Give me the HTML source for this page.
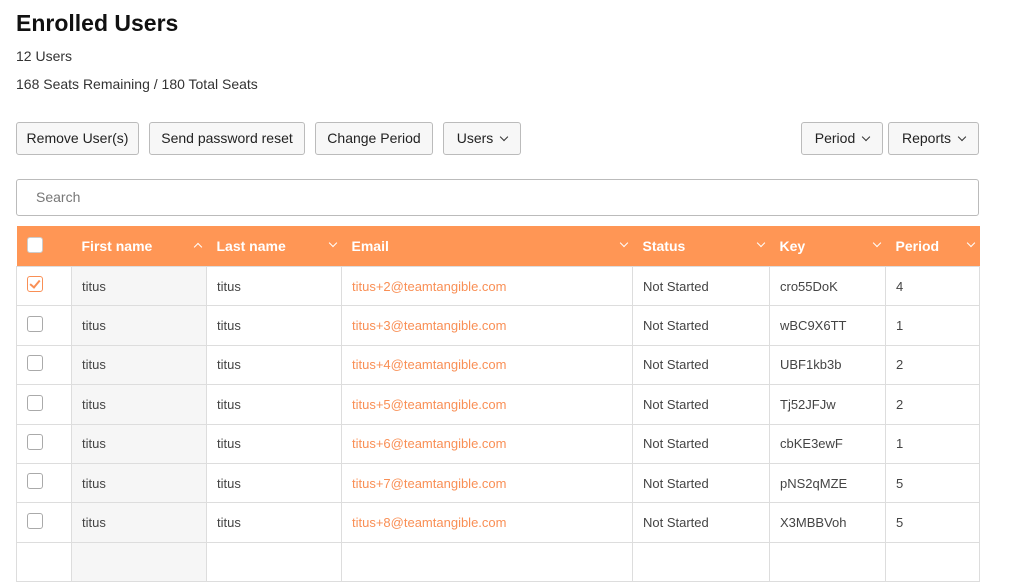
<!DOCTYPE html><html><head><style>
body{margin:0;width:1024px;height:550px;overflow:hidden;background:#fff;font-family:"Liberation Sans",sans-serif;color:#333;position:relative}
.a{position:absolute}
h1{position:absolute;left:16px;top:10px;margin:0;font-size:23px;font-weight:bold;color:#111}
.btn{position:absolute;top:122px;height:31px;border:1px solid #bbb;border-radius:3px;background:#f7f7f7;font-size:14px;line-height:31px;text-align:center;color:#222;box-sizing:content-box}
.chev{display:inline-block;width:5px;height:5px;border-right:1.5px solid #333;border-bottom:1.5px solid #333;transform:rotate(45deg);margin-left:8px;position:relative;top:-3px}
.hc{display:inline-block;width:5px;height:5px;border-right:1.5px solid #fff;border-bottom:1.5px solid #fff;transform:rotate(45deg);position:absolute;top:14px}
.up{transform:rotate(-135deg);top:18px}
.search{left:16px;top:179px;width:961px;height:35px;border:1px solid #bbb;border-radius:3px;font-size:14px;line-height:35px;color:#777;text-indent:19px}
table{position:absolute;left:16px;top:226px;border-collapse:collapse;font-size:13px;table-layout:fixed;width:963px}
th{background:#ff9655;color:#fff;text-align:left;height:40px;padding:0 0 0 10px;font-size:14px;position:relative;font-weight:bold}
td{height:39.4px;border:1px solid #ddd;padding:0 0 0 10px;color:#444;box-sizing:border-box}
td.f{background:#f6f6f6}
td.e{color:#f98f55}
.cb{display:inline-block;width:14px;height:14px;border:1px solid #aaa;border-radius:3px;background:#fff;vertical-align:middle;position:relative;top:-2px}
.ck{border-color:#f98f55}
.ck:after{content:"";position:absolute;left:4px;top:1px;width:4px;height:8px;border-right:2px solid #f98f55;border-bottom:2px solid #f98f55;transform:rotate(40deg)}
</style></head><body>
<h1>Enrolled Users</h1>
<div class="a" style="left:16px;top:48px;font-size:14px">12 Users</div>
<div class="a" style="left:16px;top:76px;font-size:14px">168 Seats Remaining / 180 Total Seats</div>
<div class="btn" style="left:16px;width:121px">Remove User(s)</div>
<div class="btn" style="left:149px;width:154px">Send password reset</div>
<div class="btn" style="left:315px;width:116px">Change Period</div>
<div class="btn" style="left:443px;width:76px">Users<span class="chev"></span></div>
<div class="btn" style="left:801px;width:80px">Period<span class="chev"></span></div>
<div class="btn" style="left:888px;width:89px">Reports<span class="chev"></span></div>
<div class="a search">Search</div>
<table>
<colgroup><col style="width:55px"><col style="width:135px"><col style="width:135px"><col style="width:291px"><col style="width:137px"><col style="width:116px"><col style="width:94px"></colgroup>
<tr><th><span class="cb" style="border-color:#ccc"></span></th><th>First name<span class="hc up" style="right:6px"></span></th><th>Last name<span class="hc" style="right:6px"></span></th><th>Email<span class="hc" style="right:6px"></span></th><th>Status<span class="hc" style="right:6px"></span></th><th>Key<span class="hc" style="right:6px"></span></th><th>Period<span class="hc" style="right:6px"></span></th></tr>
<tr><td><span class="cb ck"></span></td><td class="f">titus</td><td>titus</td><td class="e">titus+2@teamtangible.com</td><td>Not Started</td><td>cro55DoK</td><td>4</td></tr>
<tr><td><span class="cb"></span></td><td class="f">titus</td><td>titus</td><td class="e">titus+3@teamtangible.com</td><td>Not Started</td><td>wBC9X6TT</td><td>1</td></tr>
<tr><td><span class="cb"></span></td><td class="f">titus</td><td>titus</td><td class="e">titus+4@teamtangible.com</td><td>Not Started</td><td>UBF1kb3b</td><td>2</td></tr>
<tr><td><span class="cb"></span></td><td class="f">titus</td><td>titus</td><td class="e">titus+5@teamtangible.com</td><td>Not Started</td><td>Tj52JFJw</td><td>2</td></tr>
<tr><td><span class="cb"></span></td><td class="f">titus</td><td>titus</td><td class="e">titus+6@teamtangible.com</td><td>Not Started</td><td>cbKE3ewF</td><td>1</td></tr>
<tr><td><span class="cb"></span></td><td class="f">titus</td><td>titus</td><td class="e">titus+7@teamtangible.com</td><td>Not Started</td><td>pNS2qMZE</td><td>5</td></tr>
<tr><td><span class="cb"></span></td><td class="f">titus</td><td>titus</td><td class="e">titus+8@teamtangible.com</td><td>Not Started</td><td>X3MBBVoh</td><td>5</td></tr>
<tr><td></td><td class="f"></td><td></td><td></td><td></td><td></td><td></td></tr>
</table>
</body></html>
